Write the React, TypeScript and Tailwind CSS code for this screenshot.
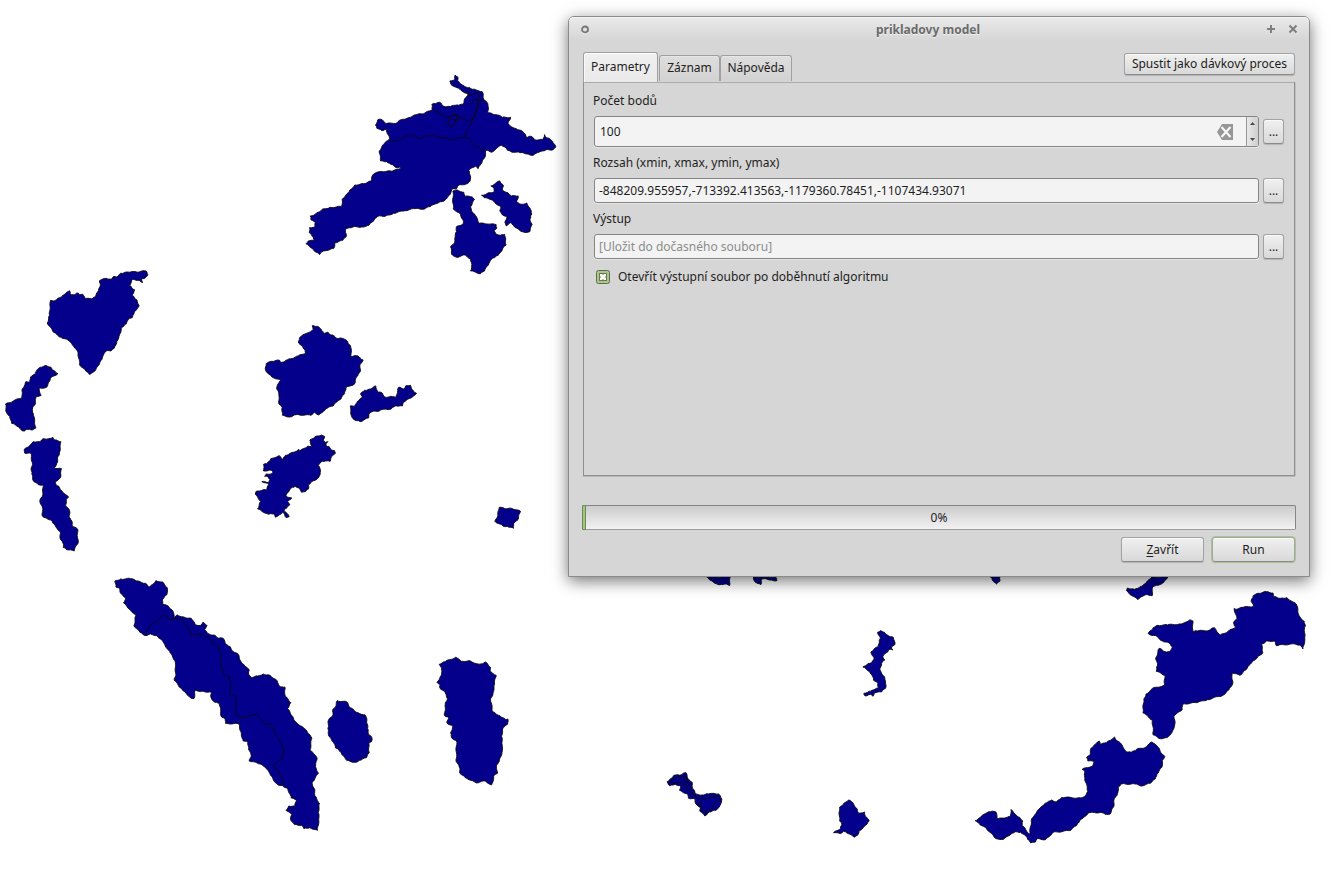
import React from "react";

type Region = { x: number; y: number; shapes: string[]; lines?: string[] };

/* Every region is digitised on a grid three times finer than a pixel. */
const regions: Region[] = [
  {
    x: 290,
    y: 60,
    shapes: [
      "495,44 503,50 502,61 512,71 524,79 538,82 547,87 560,90 576,94 579,106 582,120 591,127 594,140 592,157 607,161 622,164 636,171 661,171 653,189 667,201 682,208 698,214 705,221 709,232 722,228 733,238 757,238 763,223 770,233 780,237 789,248 797,260 789,268 768,268 748,275 729,285 711,281 690,277 671,276 652,270 643,260 634,255 621,262 604,276 587,270 586,286 577,299 571,313 564,325 557,317 547,322 536,330 540,345 540,362 528,371 506,374 500,384 488,385 482,397 470,414 456,424 438,430 420,439 397,447 375,445 345,451 310,459 285,468 263,468 251,481 236,495 214,500 188,500 166,507 169,526 158,540 134,547 131,564 100,572 88,583 72,572 60,561 47,550 54,542 72,541 66,528 57,517 58,502 75,499 75,487 62,478 60,467 75,462 96,447 120,441 154,439 156,417 167,404 179,389 194,374 220,370 244,362 247,345 260,336 285,334 308,332 330,325 332,319 318,322 302,312 289,304 271,302 267,272 279,253 293,241 298,235 290,216 289,207 275,211 260,204 256,195 262,179 272,177 288,190 320,188 333,178 355,172 373,164 401,160 426,148 425,132 437,130 448,126 461,138 480,139 500,134 519,132 523,116 534,100 518,94 500,82 482,72 479,62 493,60",
      "488,392 501,389 521,396 526,408 546,410 553,418 542,438 544,451 555,465 567,489 592,491 618,493 620,503 611,511 616,519 630,525 643,522 646,541 648,554 637,566 624,585 608,593 596,610 583,632 571,640 541,632 545,613 541,596 525,584 499,591 484,581 481,559 493,547 495,530 499,513 498,500 519,490 518,478 508,458 489,446",
      "574,405 590,400 612,394 611,382 602,377 629,362 640,377 637,390 653,397 664,407 684,407 679,425 693,432 710,428 721,447 725,461 719,478 726,491 719,514 702,516 687,509 671,497 661,487 648,497 644,486 650,468 637,464 629,453 632,439 614,427 602,418 582,412",
    ],
    lines: [
      "298,239 330,240 346,228 370,224 391,235 407,225 440,229 465,233 485,239 521,230 537,234 549,252 568,263 586,266",
      "426,144 439,154 450,163 469,169 485,168 494,161 503,165 514,174 529,180 548,177 555,158 560,143 564,126 559,116 549,120 541,130",
      "521,230 529,211 542,194 548,177 558,155 565,122 582,120",
      "537,82 531,94 536,106 549,101 560,95 566,107 564,119",
      "471,186 479,182 477,172 487,164 498,164 508,174 493,185 492,194 480,199 471,188",
      "486,178 495,180 502,173",
    ],
  },
  {
    x: 0,
    y: 260,
    shapes: [
      "151,120 164,121 178,112 194,102 208,91 210,101 223,103 230,98 239,103 248,102 255,116 264,114 276,116 287,107 295,90 301,74 298,61 318,54 334,57 341,48 350,50 361,39 382,35 409,35 437,32 443,43 434,54 424,55 427,67 417,60 397,57 388,75 395,83 403,88 396,104 411,120 417,138 402,154 397,171 387,174 379,190 365,201 358,223 350,243 342,264 332,272 318,272 307,291 299,306 287,328 278,336 267,342 255,329 238,313 234,278 220,258 203,239 182,231 160,216 141,188 148,165 150,145",
      "91,350 105,342 108,333 120,321 133,316 151,320 156,329 166,335 173,340 154,350 148,363 139,381 116,384 123,405 108,408 106,427 97,443 100,466 107,503 93,509 80,507 73,512 63,509 55,499 34,489 29,468 19,457 16,431 65,412 65,390 77,364 89,366",
      "72,567 92,552 99,544 121,545 129,535 145,535 158,531 164,539 182,544 180,571 174,588 172,606 162,623 184,625 181,652 165,664 168,673 176,678 181,688 193,700 205,710 198,718 196,735 208,751 207,771 215,782 217,799 232,806 233,850 225,861 222,872 205,869 189,861 188,848 181,838 180,814 167,800 157,787 153,779 139,774 127,768 126,739 119,722 128,704 129,674 114,673 99,661 95,642 93,630 97,612 92,579 73,578",
    ],
  },
  {
    x: 240,
    y: 310,
    shapes: [
      "216,46 231,48 242,56 250,69 263,66 271,74 281,76 289,84 300,83 319,90 324,101 331,107 334,140 349,136 369,149 360,161 361,180 353,196 345,210 343,221 332,226 317,232 313,250 303,265 291,274 279,287 257,295 246,307 235,314 223,305 212,315 168,313 149,320 127,315 126,291 115,277 116,251 110,237 113,221 121,210 94,199 76,180 78,160 94,153 118,150 121,157 142,148 174,137 196,128 195,120 175,98 178,82 197,70 219,58",
      "330,287 344,287 352,273 366,262 361,250 373,240 391,236 407,227 413,246 423,246 434,260 457,259 466,262 475,231 492,236 496,227 511,225 514,236 529,249 517,260 490,276 487,287 467,286 453,296 430,297 416,303 396,304 388,308 385,323 360,334 342,328 334,317 332,299",
      "209,389 224,380 244,374 253,378 249,389 255,397 263,394 257,405 267,409 271,416 283,421 286,429 272,443 270,453 247,453 234,465 241,481 240,491 230,507 212,517 204,524 205,536 195,544 184,546 179,536 165,528 156,531 146,544 137,557 155,563 142,573 149,583 139,594 131,599 147,619 138,622 128,606 118,613 106,621 103,611 85,612 52,596 62,573 46,553 48,543 69,538 79,540 86,522 65,514 84,517 89,508 84,500 73,498 78,491 95,490 99,485 89,479 70,482 70,462 80,460 92,445 117,436 127,449 136,435 160,426 176,417 178,423 203,407 215,408",
      "777,591 794,595 817,595 841,603 836,613 832,630 820,640 820,654 801,648 788,647 764,633 773,615",
    ],
  },
  {
    x: 100,
    y: 565,
    shapes: [
      "44,47 61,41 91,40 109,47 135,54 149,65 167,46 187,50 201,67 200,88 186,104 187,117 205,123 218,137 222,159 231,149 253,156 273,159 285,178 302,180 308,171 321,181 313,193 328,207 346,211 356,219 369,219 375,235 390,244 398,258 415,268 421,286 435,302 447,315 445,326 453,337 473,332 489,326 509,330 528,343 541,365 554,365 555,393 572,412 562,430 574,450 584,468 610,487 625,505 635,519 629,555 641,566 651,580 646,604 655,624 635,652 642,669 644,691 658,714 654,741 656,758 652,795 629,787 611,790 604,780 582,777 571,762 575,748 557,735 566,722 584,723 589,704 573,698 563,670 547,661 534,659 519,643 509,625 494,605 480,596 447,587 453,570 445,553 443,531 429,527 422,499 416,476 376,474 375,460 364,455 357,414 344,411 333,398 333,380 304,378 285,375 281,400 270,397 255,380 240,367 222,345 227,327 224,286 210,263 190,232 171,211 151,206 137,211 119,201 101,181 107,151 91,134 70,113 76,97 61,84 58,68 47,65",
      "711,406 740,410 750,427 769,441 795,449 800,466 802,489 806,508 815,517 814,529 806,535 807,562 799,577 783,584 764,591 739,585 725,568 713,550 706,548 700,532 687,514 683,489 685,464 697,452 698,432 708,420",
    ],
    lines: [
      "137,211 139,197 153,178 173,167 193,145 205,162 227,160 240,161 252,173 266,187 272,209 302,208 322,214 337,231 351,243 357,242 363,277 361,299 370,325 388,336 391,354 389,387 409,395 408,419 407,441 414,454 439,455 469,447 484,463 500,480 510,475 525,506 542,533 552,555 546,579 520,601 537,621 548,641 549,655 541,660",
    ],
  },
  {
    x: 420,
    y: 640,
    shapes: [
      "57,72 75,64 106,51 123,63 149,61 169,70 187,70 195,65 211,81 211,94 228,105 221,137 218,164 211,178 217,214 239,226 255,237 263,236 262,252 247,266 244,288 246,314 245,341 237,364 229,374 232,399 223,403 214,434 195,422 169,428 148,419 136,413 119,399 119,384 108,364 109,302 94,292 91,277 98,258 80,248 85,230 73,226 75,193 82,176 72,153 60,145 59,132 50,126 64,104 63,81",
      "741,424 749,417 761,405 779,405 797,397 803,415 816,426 818,445 826,461 846,464 860,460 895,461 905,476 899,496 888,510 866,515 854,527 839,513 842,502 827,491 825,477 805,474 803,462 778,450 781,436 765,432 748,436",
    ],
    lines: [
      "748,427 756,418 772,412 788,406 801,413 805,427 810,443 820,463 833,473 849,475 867,473 883,467 898,469",
      "788,406 798,426 799,446 813,456 824,468",
      "833,489 843,486 839,497 849,508 855,511 855,521 862,515 874,506 881,491 898,478",
      "749,421 757,430 769,427 786,429 799,436",
    ],
  },
  {
    x: 820,
    y: 610,
    shapes: [
      "172,66 180,61 193,66 203,75 220,82 224,103 214,110 218,119 208,117 199,127 188,138 194,149 184,159 179,179 190,196 196,213 196,234 184,245 162,248 158,258 150,252 135,257 131,249 147,243 159,239 175,233 173,219 160,210 155,194 143,181 128,170 143,160 154,157 162,143 152,125 161,117 174,109 177,90 180,80",
      "58,591 69,582 85,569 97,576 111,596 116,609 133,605 137,619 147,632 136,645 116,663 112,675 103,681 80,668 70,663 60,670 40,667 61,654 65,642 58,631",
    ],
  },
  {
    x: 960,
    y: 570,
    shapes: [
      "45,751 61,741 75,730 91,724 106,724 113,746 151,738 152,718 166,732 175,740 188,752 186,766 209,792 213,751 224,733 243,709 260,697 275,689 289,695 305,681 362,683 376,675 383,663 374,625 374,602 366,597 381,592 397,588 403,574 383,572 379,562 389,555 393,533 407,521 417,512 420,523 438,517 463,500 468,510 484,522 499,545 513,546 529,537 554,532 575,515 594,531 600,543 614,559 606,570 605,591 590,612 585,626 570,639 541,647 524,641 484,641 474,650 472,670 463,684 460,710 450,731 435,732 422,726 384,728 368,744 359,750 349,766 329,781 279,786 256,808 231,805 226,815 211,818 201,802 181,786 166,784 149,795 130,807 108,805 93,789 79,775 60,764",
      "564,190 579,172 593,165 622,164 658,161 678,155 688,149 698,152 698,184 712,182 747,180 762,172 780,194 804,183 826,170 820,157 830,145 822,114 829,117 849,111 880,108 873,94 879,76 895,69 919,64 938,68 939,79 961,84 979,82 993,92 1008,101 1013,120 1017,137 1032,153 1036,166 1032,182 1034,206 1028,236 1019,224 991,221 948,226 943,212 918,212 904,223 908,247 892,260 874,278 858,298 839,315 815,308 818,338 806,359 788,375 742,388 711,397 668,401 666,418 652,427 641,439 644,461 636,485 621,502 600,505 579,494 577,450 548,427 551,389 557,372 577,354 613,345 614,315 588,303 592,285 586,265 597,234 614,244 627,244 637,230 627,218 606,212 590,198 569,193",
      "91,20 119,20 119,33 109,41 100,34 95,24",
      "575,20 622,20 611,35 594,45 578,49 576,76 563,73 549,77 533,88 515,76 499,61 502,53 523,57 540,49 557,39",
    ],
  },
  {
    x: 560,
    y: 460,
    shapes: [
      "440,350 510,350 508,376 494,371 480,373 464,369 450,360",
      "580,350 646,350 650,361 628,359 617,355 603,358 602,373 588,367 580,357",
    ],
  },
];

/* Breaks straight runs into short steps so that borders look surveyed, not ruled. */
function roughen(points: string, closed: boolean): string {
  const p = points.split(" ").map((s) => s.split(",").map(Number));
  const out: string[] = [];
  const edges = closed ? p.length : p.length - 1;
  for (let i = 0; i < edges; i++) {
    const [ax, ay] = p[i];
    const [bx, by] = p[(i + 1) % p.length];
    const len = Math.hypot(bx - ax, by - ay);
    const steps = Math.max(1, Math.round(len / 5));
    out.push(`${ax},${ay}`);
    for (let k = 1; k < steps; k++) {
      const t = k / steps;
      const off = Math.sin((ax * 3.7 + ay * 1.9 + k * 2.3) * 5.1) * 1.5;
      const x = ax + (bx - ax) * t - ((by - ay) / len) * off;
      const y = ay + (by - ay) * t + ((bx - ax) / len) * off;
      out.push(`${x.toFixed(1)},${y.toFixed(1)}`);
    }
  }
  if (!closed) out.push(p[p.length - 1].join(","));
  return out.join(" ");
}

function WaterMap() {
  return (
    <svg className="block" width="1341" height="871" viewBox="0 0 1341 871" aria-hidden="true">
      {regions.map((r) => (
        <g
          key={`${r.x}-${r.y}`}
          transform={`translate(${r.x + 0.2} ${r.y + 0.3}) scale(0.33333)`}
          stroke="#0a0a14"
          strokeWidth="2.7"
          strokeLinejoin="round"
        >
          {r.shapes.map((p) => (
            <polygon key={p} points={roughen(p, true)} fill="#04008b" />
          ))}
          {r.lines?.map((p) => (
            <polyline key={p} points={roughen(p, false)} fill="none" />
          ))}
        </g>
      ))}
    </svg>
  );
}

const raised =
  "flex items-center justify-center rounded-[3px] border border-[#a3a3a3] border-b-[#8a8a8a] bg-linear-to-b from-[#f0f0f0] to-[#d9d9d9] shadow-[0_1px_1px_rgba(0,0,0,0.16),inset_0_1px_0_#fafafa]";

const field =
  "flex w-[665px] items-center rounded-[3px] border border-[#858585] bg-[#f3f3f3] shadow-[0_1px_0_#e6e6e6]";

function Browse() {
  return <button className={`${raised} h-[25px] w-[21px] pt-[1px]`}>...</button>;
}

function TitleBar() {
  return (
    <header className="flex h-[35px] items-start rounded-t-[5px] bg-linear-to-b from-[#e9e9e9] from-[4%] to-[#d6d6d6] to-[66%] px-[11px] pt-[7px] shadow-[inset_0_1px_0_#f4f4f4]">
      <div className="flex w-[38px] pt-[1px]">
        <svg width="10" height="10" viewBox="0 0 10 10">
          <circle cx="5" cy="4.5" r="3" fill="none" stroke="#777" strokeWidth="1.8" />
          <path d="M1.5 7.5Q5 10.5 8.5 7.5" fill="none" stroke="#f2f2f2" strokeWidth="0.7" />
        </svg>
      </div>
      <h1 className="-mt-[3px] flex-1 text-center font-bold text-[#6b6b6b] [text-shadow:0_1px_0_#f0f0f0]">
        prikladovy model
      </h1>
      <div className="flex w-[60px] justify-end gap-[12px]">
        <svg width="10" height="10" viewBox="0 0 10 10">
          <path d="M5 1v8M1 5h8" stroke="#808080" strokeWidth="2" />
        </svg>
        <svg width="10" height="10" viewBox="0 0 10 10">
          <path d="M1.5 1.5l7 7M8.5 1.5l-7 7" stroke="#808080" strokeWidth="2.1" />
        </svg>
      </div>
    </header>
  );
}

export default function App() {
  return (
    <main className="relative h-[871px] w-[1341px] overflow-hidden bg-white font-['Noto_Sans',sans-serif] text-[12px] leading-[18px] text-[#1e1e1e]">
      <WaterMap />
      <section className="absolute left-[568px] top-[16px] flex h-[561px] w-[742px] flex-col rounded-t-[6px] border border-[#8b8b8b] bg-[#d6d6d6] shadow-[0_4px_16px_rgba(0,0,0,0.55)]">
        <TitleBar />

        <div className="flex h-[30px] justify-between pl-[14px] pr-[14px]">
          <nav className="flex items-end">
            <div className="relative z-10 flex h-[30px] w-[75px] items-center justify-center rounded-t-[3px] border border-b-0 border-[#a0a0a0] bg-linear-to-b from-[#f0f0f0] to-[#e9e9e9] pb-[2px] shadow-[inset_0_1px_0_#fff,inset_1px_0_0_#f9f9f9]">
              Parametry
            </div>
            <div className="ml-[1px] mb-[1px] flex h-[26px] w-[61px] items-center justify-center rounded-t-[3px] border border-b-0 border-[#a0a0a0] bg-linear-to-b from-[#dedede] to-[#d2d2d2] pb-[1px] shadow-[inset_0_1px_0_#e6e6e6]">
              Záznam
            </div>
            <div className="mb-[1px] flex h-[26px] w-[72px] items-center justify-center rounded-t-[3px] border border-b-0 border-[#a0a0a0] bg-linear-to-b from-[#dedede] to-[#d2d2d2] pb-[1px] shadow-[inset_0_1px_0_#e6e6e6]">
              Nápověda
            </div>
          </nav>
          <button className={`${raised} mt-[1px] h-[22px] w-[171px] whitespace-nowrap`}>
            Spustit jako dávkový proces
          </button>
        </div>

        <div className="ml-[14px] flex h-[394px] w-[712px] flex-col border border-[#8f8f8f] border-t-[#ababab] pl-[9px] shadow-[0_1px_0_#b8b8b8,1px_0_0_#c0c0c0]">
          <label className="mt-[9px]">Počet bodů</label>
          <div className="mt-[6px] ml-[1px] flex items-center gap-[4px]">
            <div className={`${field} h-[31px] overflow-hidden pl-[5px]`}>
              <span className="flex-1">100</span>
              <svg className="mr-[13px]" width="16" height="16" viewBox="0 0 16 16">
                <path d="M5 0h11v16H5L0 8z" fill="#969696" />
                <path d="M4.5 3l9 10M13.5 3L4.5 13" stroke="#f7f7f7" strokeWidth="2.1" />
              </svg>
              <div className="flex h-full w-[12px] flex-col items-center justify-between border-l border-[#999] bg-linear-to-r from-[#e8e8e8] to-[#cfcfcf] py-[5px]">
                <svg width="5" height="3" viewBox="0 0 5 3">
                  <path d="M2.5 0L5 3H0z" fill="#484848" />
                </svg>
                <svg width="5" height="3" viewBox="0 0 5 3">
                  <path d="M2.5 3L5 0H0z" fill="#484848" />
                </svg>
              </div>
            </div>
            <Browse />
          </div>

          <label className="mt-[7px]">Rozsah (xmin, xmax, ymin, ymax)</label>
          <div className="mt-[6px] ml-[1px] flex gap-[4px]">
            <div className={`${field} h-[25px] pl-[4px]`}>
              -848209.955957,-713392.413563,-1179360.78451,-1107434.93071
            </div>
            <Browse />
          </div>

          <label className="mt-[7px]">Výstup</label>
          <div className="mt-[6px] ml-[1px] flex gap-[4px]">
            <div className={`${field} h-[25px] pl-[4px] text-[#8c8c8c]`}>[Uložit do dočasného souboru]</div>
            <Browse />
          </div>

          <label className="mt-[9px] ml-[3px] flex items-center gap-[8px]">
            <svg className="-mt-[1px]" width="14" height="14" viewBox="0 0 14 14">
              <rect x=".5" y=".5" width="13" height="13" rx="2" fill="#a9c886" stroke="#606a56" />
              <rect x="3" y="3" width="8" height="8" fill="#667c50" />
              <path d="M4 4h2l1 1 1-1h2v2L9 7l1 1v2H8L7 9l-1 1H4V8l1-1-1-1z" fill="#fff" />
            </svg>
            Otevřít výstupní soubor po doběhnutí algoritmu
          </label>
        </div>

        <div className="mt-[29px] ml-[13px] flex h-[25px] w-[714px] rounded-[2px] border border-[#858585] border-b-[#9b9b9b] bg-linear-to-b from-[#cccccc] to-[#f2f2f2]">
          <div className="-my-[1px] -ml-[1px] w-[4px] rounded-l-[1px] border border-[#6f8b55] bg-[#a3c283]" />
          <div className="flex flex-1 items-center justify-center pr-[3px]">0%</div>
        </div>

        <footer className="mt-[7px] flex justify-end gap-[8px] pr-[14px]">
          <button className={`${raised} h-[25px] w-[83px]`}>
            <span className="underline underline-offset-2">Z</span>avřít
          </button>
          <button className={`${raised} h-[25px] w-[83px] outline-1 outline-[#a9c58f]`}>Run</button>
        </footer>
      </section>
    </main>
  );
}
